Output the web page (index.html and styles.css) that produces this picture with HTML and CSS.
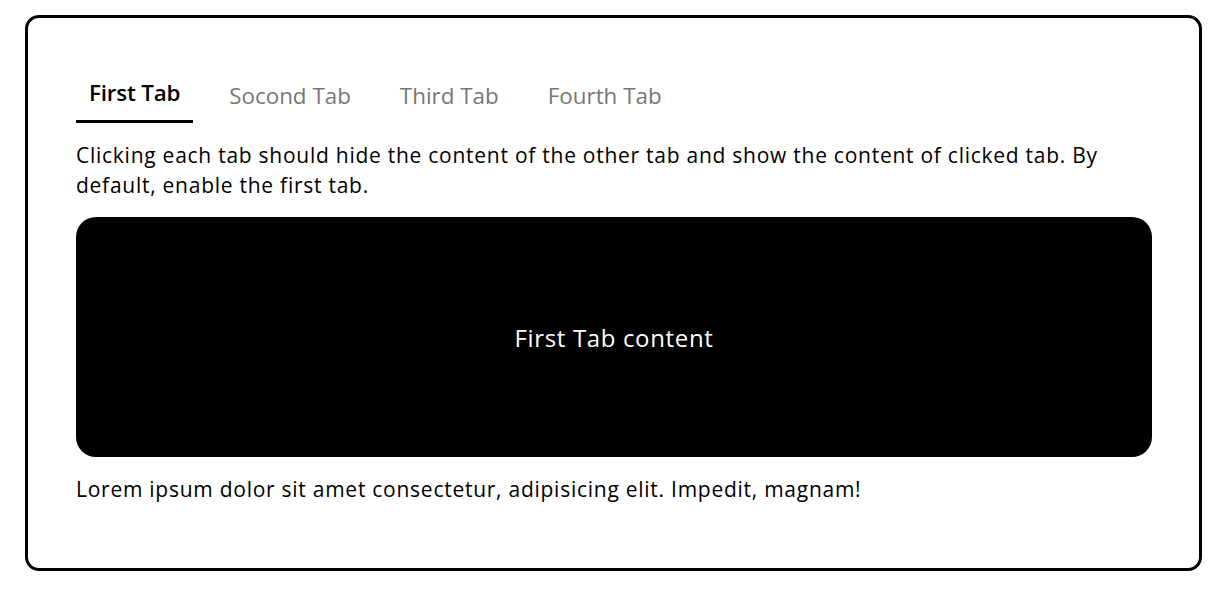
FILE: index.html
```html
<!DOCTYPE html>
<html lang="en">
<head>
<meta charset="utf-8">
<title>Tabs</title>
<link rel="stylesheet" href="styles.css">
</head>
<body>
  <div class="card">
    <div class="tabs">
      <div class="tab active">First Tab</div>
      <div class="tab">Socond Tab</div>
      <div class="tab">Third Tab</div>
      <div class="tab">Fourth Tab</div>
    </div>
    <p class="desc">Clicking each tab should hide the content of the other tab and show the content of clicked tab. By default, enable the first tab.</p>
    <div class="panel">First Tab content</div>
    <p class="foot">Lorem ipsum dolor sit amet consectetur, adipisicing elit. Impedit, magnam!</p>
  </div>
</body>
</html>
```
FILE: styles.css
```css
html, body {
  margin: 0;
  padding: 0;
  background: #fff;
}
body {
  padding: 15px 20px 0 25px;
  font-family: "Open Sans", "Noto Sans", sans-serif;
  color: #000;
}
.card {
  box-sizing: border-box;
  width: 1177px;
  height: 556px;
  border: 3px solid #000;
  border-radius: 14px;
  padding: 57px 47px 0 48px;
}
.tabs {
  display: flex;
  gap: 23px;
}
.tab {
  padding: 0 13px;
  height: 48px;
  line-height: 41px;
  font-size: 22.4px;
  color: #777;
  box-sizing: border-box;
}
.tab.active {
  color: #000;
  font-weight: 600;
  border-bottom: 3px solid #000;
  line-height: 35px;
  letter-spacing: -0.2px;
}
.desc {
  margin: 17px 0 0;
  font-size: 21px;
  line-height: 30px;
  letter-spacing: 0.74px;
}
.panel {
  margin-top: 17px;
  height: 240px;
  background: #000;
  color: #fff;
  border-radius: 20px;
  display: flex;
  align-items: center;
  justify-content: center;
  font-size: 24px;
  letter-spacing: 0.65px;
}
.foot {
  margin: 17px 0 0;
  font-size: 21px;
  line-height: 30px;
  letter-spacing: 0.74px;
}
```
